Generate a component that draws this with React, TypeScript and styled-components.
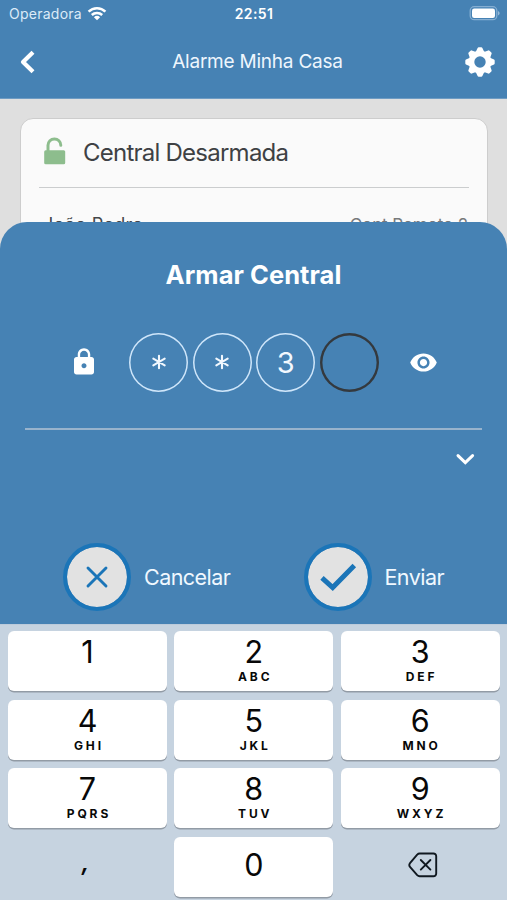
import React from "react";
import styled, { createGlobalStyle } from "styled-components";
import { MdLock, MdVisibility } from "react-icons/md";

const GlobalStyle = createGlobalStyle`
  * { box-sizing: border-box; }
  body {
    margin: 0;
    font-family: Inter, "Liberation Sans", sans-serif;
    background: #dfdfdf;
  }
  svg { display: block; flex: none; }
`;

const BLUE = "#4682b4";

const Screen = styled.div`
  width: 507px;
  height: 900px;
  display: flex;
  flex-direction: column;
  overflow: hidden;
  background: #dfdfdf;
`;

const StatusBar = styled.div`
  height: 27px;
  flex: none;
  display: grid;
  grid-template-columns: 1fr auto 1fr;
  align-items: center;
  padding: 0 7px 0 9px;
  background: ${BLUE};
  color: #fff;
`;

const Carrier = styled.div`
  display: flex;
  align-items: center;
  gap: 5px;
  color: #dcebf8;
  font-size: 14px;
  letter-spacing: 0.25px;
`;

const Clock = styled.div`
  margin-right: 1px;
  font-size: 14px;
  font-weight: 600;
  letter-spacing: 0.4px;
`;

const BatterySlot = styled.div`
  justify-self: end;
`;

const Header = styled.header`
  height: 72px;
  flex: none;
  display: grid;
  grid-template-columns: 48px 1fr 48px;
  align-items: center;
  padding: 0 11px 2px 15px;
  background: ${BLUE};
  border-bottom: 1px solid #6f9cc3;
`;

const HeaderTitle = styled.h1`
  margin: 0 0 0 4px;
  text-align: center;
  font-size: 19px;
  font-weight: 400;
  letter-spacing: -0.22px;
  color: #eef6fd;
  white-space: nowrap;
`;

const HeaderAction = styled.div<{ $end?: boolean }>`
  display: flex;
  justify-content: ${(p) => (p.$end ? "flex-end" : "flex-start")};
`;

const Content = styled.main`
  height: 153px;
  flex: none;
  padding: 19px 19px 0 20px;
  overflow: hidden;
`;

const Card = styled.section`
  height: 180px;
  padding: 0 18px;
  background: #fafafa;
  border: 1px solid #cdcdcd;
  border-radius: 13px;
`;

const CardHeading = styled.div`
  height: 69px;
  display: flex;
  align-items: center;
  gap: 17px;
  padding: 0 0 1px 5px;
  border-bottom: 1.5px solid #cbcdce;
`;

const CardIcon = styled.span`
  padding-bottom: 3px;
`;

const CardTitle = styled.h2`
  margin: 0;
  font-size: 24px;
  font-weight: 400;
  letter-spacing: -0.76px;
  color: #3e4144;
  white-space: nowrap;
`;

const CardRow = styled.div`
  display: flex;
  justify-content: space-between;
  padding: 26px 1px 0 9px;
  line-height: 22px;
`;

const UserName = styled.span`
  margin-left: -5px;
  font-size: 18px;
  letter-spacing: 0.3px;
  color: #444749;
`;

const Source = styled.span`
  font-size: 17px;
  letter-spacing: -0.1px;
  color: #77797b;
`;

const Sheet = styled.section`
  position: relative;
  height: 402px;
  margin-top: -30px;
  flex: none;
  display: flex;
  flex-direction: column;
  padding: 0 25px;
  background: ${BLUE};
  border-radius: 27px 27px 0 0;
  color: #fff;
`;

const SheetTitle = styled.h2`
  margin: 37px 0 0;
  text-align: center;
  font-size: 25.5px;
  line-height: 32px;
  font-weight: 700;
  letter-spacing: 0.05px;
`;

const PinRow = styled.div`
  display: flex;
  align-items: center;
  height: 60px;
  margin-top: 41px;
  padding-left: 44px;
`;

const PinDigits = styled.div`
  display: flex;
  gap: 4.6px;
  margin: 0 30px 0 30px;
`;

const PinDigit = styled.div<{ $active?: boolean }>`
  width: 59px;
  height: 59px;
  display: flex;
  align-items: center;
  justify-content: center;
  box-shadow: inset 0 0 0 ${(p) => (p.$active ? "2.4px #34393e" : "1.5px #cfe6fa")};
  border-radius: 50%;
  font-size: 29px;
  color: #f2f8fe;
`;

const Divider = styled.div`
  height: 2px;
  margin-top: 36px;
  background: #98b3cc;
`;

const ExpandRow = styled.div`
  display: flex;
  justify-content: flex-end;
  padding: 21px 6px 0 0;
`;

const Actions = styled.div`
  display: grid;
  grid-template-columns: 240.5px 1fr;
  margin-top: auto;
  padding: 0 0 13px 38px;
`;

const Action = styled.button`
  display: flex;
  align-items: center;
  gap: 13px;
  padding: 0;
  border: 0;
  background: none;
  font: inherit;
  font-size: 21.5px;
  letter-spacing: -0.55px;
  color: #f0f8ff;
`;

const ActionCircle = styled.span`
  width: 68px;
  height: 68px;
  display: flex;
  align-items: center;
  justify-content: center;
  border: 4px solid #1b75b8;
  border-radius: 50%;
  background: #e2e2e2;
  background-clip: padding-box;
`;

const Keyboard = styled.div`
  flex: 1;
  display: grid;
  grid-template-columns: repeat(3, 159px);
  grid-auto-rows: 60px;
  gap: 8.5px 7.3px;
  padding: 6px 8px 0;
  background: #c6d3e0;
  border-top: 1px solid #bccbdb;
`;

const Key = styled.button<{ $plain?: boolean; $single?: boolean }>`
  display: flex;
  flex-direction: column;
  align-items: center;
  justify-content: ${(p) => (p.$plain || p.$single ? "center" : "flex-start")};
  padding: ${(p) => (p.$plain || p.$single ? "0 0 3px" : "4px 0 0")};
  border: 0;
  border-radius: 6px;
  background: ${(p) => (p.$plain ? "transparent" : "#fff")};
  box-shadow: ${(p) => (p.$plain ? "none" : "0 1.5px 0 #929ba5")};
  font: inherit;
  color: #080808;
`;

const KeyDigit = styled.span`
  font-size: 30.5px;
  line-height: 34px;
`;

const KeyLetters = styled.span`
  font-size: 12px;
  line-height: 15px;
  font-weight: 700;
  letter-spacing: 2.9px;
  margin-right: -2.9px;
`;

const Comma = styled.span`
  margin: 0 4px 4px 0;
  font-size: 24px;
  font-style: italic;
  font-weight: 600;
  line-height: 30px;
`;

const BackspaceSlot = styled.span`
  margin-left: 6px;
`;

const WifiIcon = () => (
  <svg width="20" height="15" viewBox="0 0 20 15" fill="none" stroke="#fff" strokeWidth="2.5">
    <path d="M1.6 5.6a12 12 0 0 1 16.8 0" />
    <path d="M4.8 9a7.5 7.5 0 0 1 10.4 0" />
    <path d="M10 14.3 6.9 11.2a4.5 4.5 0 0 1 6.2 0z" fill="#fff" stroke="none" />
  </svg>
);

const BatteryIcon = () => (
  <svg width="31" height="15" viewBox="0 0 31 15">
    <rect x="1.2" y=".7" width="26.6" height="13" rx="4" fill="none" stroke="#85aed2" strokeWidth="1.3" />
    <rect x="3" y="2.5" width="23" height="9.5" rx="2.2" fill="#fff" />
    <path d="M29.2 5v4.4c1.8-.8 1.8-3.6 0-4.4z" fill="#a9c7e0" />
  </svg>
);

const BackIcon = () => (
  <svg width="24" height="26" viewBox="0 0 24 26" fill="none" stroke="#fff" strokeWidth="4.2">
    <path d="M18 3.3 8 13l10 9.7" strokeLinejoin="round" />
  </svg>
);

const toothAngles = [0, 45, 90, 135, 180, 225, 270, 315];

const GearIcon = () => (
  <svg width="32" height="32" viewBox="-16 -16 32 32" fill="#fff" stroke="#fff">
    <circle r="8.5" fill="none" strokeWidth="5.6" />
    {toothAngles.map((angle) => (
      <path
        key={angle}
        d="M-3.2-9.5-1.3-13.5h2.6L3.2-9.5z"
        strokeWidth="2.4"
        strokeLinejoin="round"
        transform={`rotate(${angle})`}
      />
    ))}
  </svg>
);

const UnlockIcon = () => (
  <svg width="22" height="28" viewBox="0 0 22 28">
    <path d="M4 14V8.3a6.4 6.4 0 0 1 12.8 0" fill="none" stroke="#8dbd8d" strokeWidth="3" strokeLinecap="round" />
    <rect x=".2" y="13.3" width="21" height="14" rx="1.5" fill="#8dbd8d" />
  </svg>
);

const AsteriskIcon = () => (
  <svg width="16" height="16" viewBox="-8 -8 16 16" stroke="#f2f8fe" strokeWidth="2.1" strokeLinecap="round">
    <path d="M0-6.2V6.2M-5.7-3.3 5.7 3.3M-5.7 3.3 5.7-3.3" />
  </svg>
);

const ChevronIcon = () => (
  <svg width="22" height="16" viewBox="0 0 22 16" fill="none" stroke="#fff" strokeWidth="3">
    <path d="m4 4.6 7.3 7.1 7.3-7.1" strokeLinecap="round" />
  </svg>
);

const CloseIcon = () => (
  <svg width="24" height="24" viewBox="0 0 24 24" stroke="#1b75b8" strokeWidth="2.9" strokeLinecap="round">
    <path d="m3 3 18 18M21 3 3 21" />
  </svg>
);

const CheckIcon = () => (
  <svg width="38" height="30" viewBox="0 0 38 30" fill="none" stroke="#1b75b8" strokeWidth="5">
    <path d="m3 15.800 10.700 9.700L35.300 3.600" />
  </svg>
);

const BackspaceIcon = () => (
  <svg
    width="30"
    height="26"
    viewBox="0 0 30 26"
    fill="none"
    stroke="#101820"
    strokeWidth="1.9"
    strokeLinejoin="round"
    strokeLinecap="round"
  >
    <path d="M11.6 1.5h13.9a2.7 2.7 0 0 1 2.7 2.7v17.4a2.7 2.7 0 0 1-2.7 2.7H11.6c-1 0-1.700-.4-2.400-1.100l-7-8.100c-1.100-1.300-1.100-3 0-4.300l7-8.200c.7-.7 1.400-1.100 2.400-1.100z" />
    <path d="m12.800 8 9.600 9.600M22.400 8l-9.600 9.600" />
  </svg>
);

const keys = [
  ["1", ""],
  ["2", "ABC"],
  ["3", "DEF"],
  ["4", "GHI"],
  ["5", "JKL"],
  ["6", "MNO"],
  ["7", "PQRS"],
  ["8", "TUV"],
  ["9", "WXYZ"],
];

export default function App() {
  return (
    <>
      <GlobalStyle />
      <Screen>
        <StatusBar>
          <Carrier>
            Operadora <WifiIcon />
          </Carrier>
          <Clock>22:51</Clock>
          <BatterySlot>
            <BatteryIcon />
          </BatterySlot>
        </StatusBar>
        <Header>
          <HeaderAction>
            <BackIcon />
          </HeaderAction>
          <HeaderTitle>Alarme Minha Casa</HeaderTitle>
          <HeaderAction $end>
            <GearIcon />
          </HeaderAction>
        </Header>
        <Content>
          <Card>
            <CardHeading>
              <CardIcon>
                <UnlockIcon />
              </CardIcon>
              <CardTitle>Central Desarmada</CardTitle>
            </CardHeading>
            <CardRow>
              <UserName>João Pedro</UserName>
              <Source>Cont.Remoto 2</Source>
            </CardRow>
          </Card>
        </Content>
        <Sheet>
          <SheetTitle>Armar Central</SheetTitle>
          <PinRow>
            <MdLock size={30} />
            <PinDigits>
              <PinDigit>
                <AsteriskIcon />
              </PinDigit>
              <PinDigit>
                <AsteriskIcon />
              </PinDigit>
              <PinDigit>3</PinDigit>
              <PinDigit $active />
            </PinDigits>
            <MdVisibility size={29} />
          </PinRow>
          <Divider />
          <ExpandRow>
            <ChevronIcon />
          </ExpandRow>
          <Actions>
            <Action>
              <ActionCircle>
                <CloseIcon />
              </ActionCircle>
              Cancelar
            </Action>
            <Action>
              <ActionCircle>
                <CheckIcon />
              </ActionCircle>
              Enviar
            </Action>
          </Actions>
        </Sheet>
        <Keyboard>
          {keys.map(([digit, letters]) => (
            <Key key={digit}>
              <KeyDigit>{digit}</KeyDigit>
              {letters && <KeyLetters>{letters}</KeyLetters>}
            </Key>
          ))}
          <Key $plain>
            <Comma>,</Comma>
          </Key>
          <Key $single>
            <KeyDigit>0</KeyDigit>
          </Key>
          <Key $plain>
            <BackspaceSlot>
              <BackspaceIcon />
            </BackspaceSlot>
          </Key>
        </Keyboard>
      </Screen>
    </>
  );
}
